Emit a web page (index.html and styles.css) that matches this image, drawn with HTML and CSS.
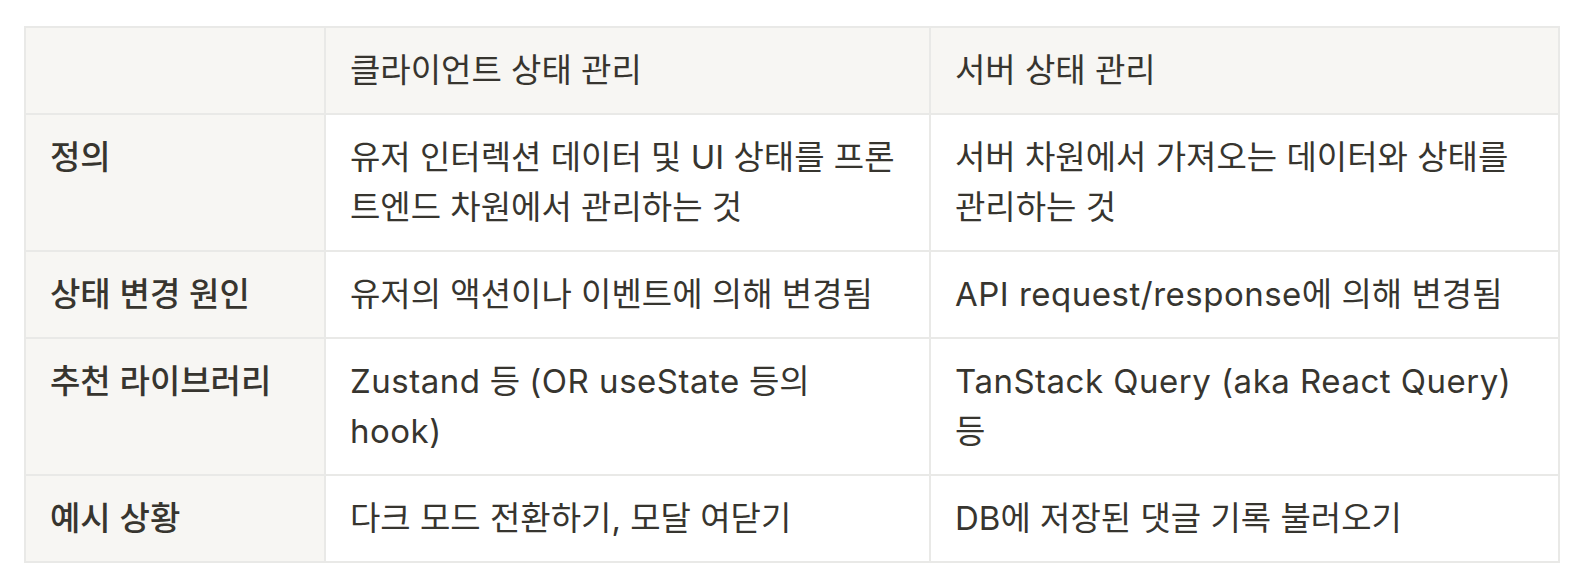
FILE: index.html
```html
<!DOCTYPE html>
<html lang="ko">
<head>
<meta charset="utf-8">
<title>상태 관리 비교</title>
<link rel="stylesheet" href="styles.css">
</head>
<body>
<div class="page">
  <table class="cmp">
    <colgroup>
      <col class="c1">
      <col class="c2">
      <col class="c3">
    </colgroup>
    <thead>
      <tr>
        <th class="corner"></th>
        <th>클라이언트 상태 관리</th>
        <th>서버 상태 관리</th>
      </tr>
    </thead>
    <tbody>
      <tr>
        <th class="rowhead">정의</th>
        <td>유저 인터렉션 데이터 및 UI 상태를 프론트엔드 차원에서 관리하는 것</td>
        <td>서버 차원에서 가져오는 데이터와 상태를 관리하는 것</td>
      </tr>
      <tr>
        <th class="rowhead">상태 변경 원인</th>
        <td>유저의 액션이나 이벤트에 의해 변경됨</td>
        <td><span class="en">API request/response</span>에 의해 변경됨</td>
      </tr>
      <tr>
        <th class="rowhead">추천 라이브러리</th>
        <td><span class="en">Zustand</span> 등 <span class="en">(OR useState</span> 등의 <span class="en">hook)</span></td>
        <td><span class="en">TanStack Query (aka React Query)</span> 등</td>
      </tr>
      <tr>
        <th class="rowhead">예시 상황</th>
        <td>다크 모드 전환하기, 모달 여닫기</td>
        <td>DB에 저장된 댓글 기록 불러오기</td>
      </tr>
    </tbody>
  </table>
</div>
</body>
</html>
```

FILE: styles.css
```css
html, body {
  margin: 0;
  padding: 0;
  background: #ffffff;
}

.page {
  padding: 26px 0 0 24px;
}

.cmp {
  border-collapse: collapse;
  table-layout: fixed;
  width: 1534px;
  font-family: Inter, "Noto Sans CJK KR", sans-serif;
  font-size: 33px;
  line-height: 50px;
  color: #37352f;
}

.c1 { width: 300px; }
.c2 { width: 605px; }
.c3 { width: 629px; }

.cmp th,
.cmp td {
  border: 2px solid #e9e9e7;
  padding: 17px 24px 18px 24px;
  text-align: left;
  vertical-align: top;
  font-weight: 400;
  background: #ffffff;
}

.cmp thead th {
  background: #f7f6f3;
}

.cmp th.rowhead {
  background: #f7f6f3;
  font-weight: 500;
}

.en {
  letter-spacing: 0.5px;
}
```
